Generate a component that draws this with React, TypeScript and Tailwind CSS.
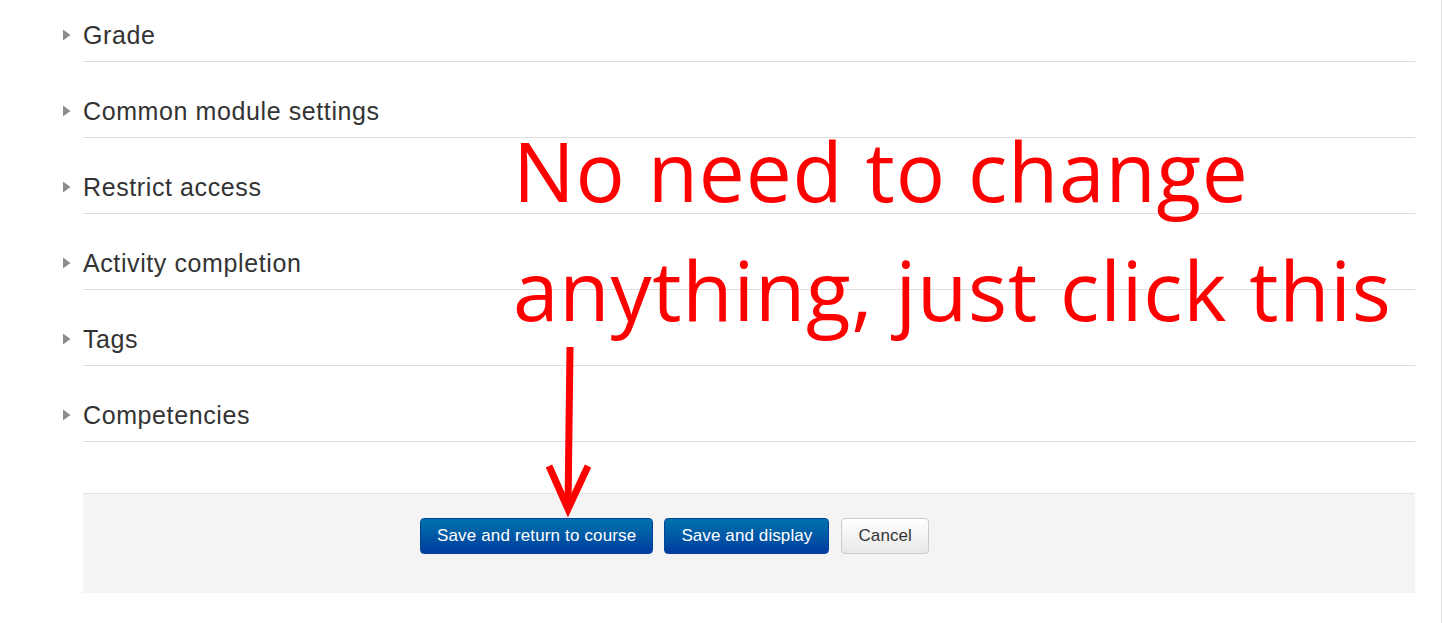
import React from 'react';

const sections = [
  'Grade',
  'Common module settings',
  'Restrict access',
  'Activity completion',
  'Tags',
  'Competencies',
];

function Caret() {
  return (
    <svg width="10" height="14" viewBox="0 0 10 14" className="shrink-0">
      <path d="M1 1.5 L8.5 7 L1 12.5 Z" fill="#8c8c8c" />
    </svg>
  );
}

export default function App() {
  return (
    <div
      className="relative w-[1442px] h-[623px] overflow-hidden bg-white border-r border-[#e3e3e3]"
      style={{ fontFamily: '"Liberation Sans", Arial, sans-serif' }}
    >
      {/* Collapsed sections */}
      <div className="mt-[-14px] pl-[62px] pr-[26px]">
        {sections.map((name) => (
          <div key={name} className="flex items-start">
            <div className="flex w-[21px] h-[30px] mt-[34px] items-center">
              <Caret />
            </div>
            <div className="flex-1 pt-[34px] pb-[11px] border-b border-[#dedede]">
              <div className="h-[30px] leading-[30px] text-[25px] tracking-[0.6px] text-[#333333]">{name}</div>
            </div>
          </div>
        ))}
      </div>

      {/* Form buttons */}
      <div className="mt-[51px] ml-[83px] mr-[26px] h-[100px] bg-[#f4f4f4] border-t border-[#e3e3e3] pt-[24px] pl-[337px]">
        <div className="flex items-center gap-[11px]">
          <button className="h-[36px] px-[16px] rounded-[4px] bg-gradient-to-b from-[#0072ab] to-[#003c9e] border border-[#00449a] text-white text-[17px] tracking-[0.15px]">
            Save and return to course
          </button>
          <button className="h-[36px] px-[16px] rounded-[4px] bg-gradient-to-b from-[#0072ab] to-[#003c9e] border border-[#00449a] text-white text-[17px] tracking-[0.1px]">
            Save and display
          </button>
          <button className="h-[36px] px-[16px] ml-[1px] rounded-[4px] bg-gradient-to-b from-white to-[#e8e8e8] border border-[#cccccc] text-[#333333] text-[17px] tracking-[0.1px]">
            Cancel
          </button>
        </div>
      </div>

      {/* Annotation */}
      <div
        className="absolute left-[513px] top-[111px] text-[#ff0000] text-[82px] tracking-[0.8px] leading-[119px] whitespace-nowrap"
        style={{ fontFamily: '"Open Sans", Lato, sans-serif' }}
      >
        <div>No need to change</div>
        <div>anything, just click this</div>
      </div>
      <svg className="absolute left-0 top-0" width="1442" height="623">
        <line x1="570" y1="347" x2="568" y2="508" stroke="#ff0000" strokeWidth="7" />
        <polyline
          points="549,466 568,509 588,466"
          fill="none"
          stroke="#ff0000"
          strokeWidth="7"
          strokeLinejoin="miter"
        />
      </svg>
    </div>
  );
}
